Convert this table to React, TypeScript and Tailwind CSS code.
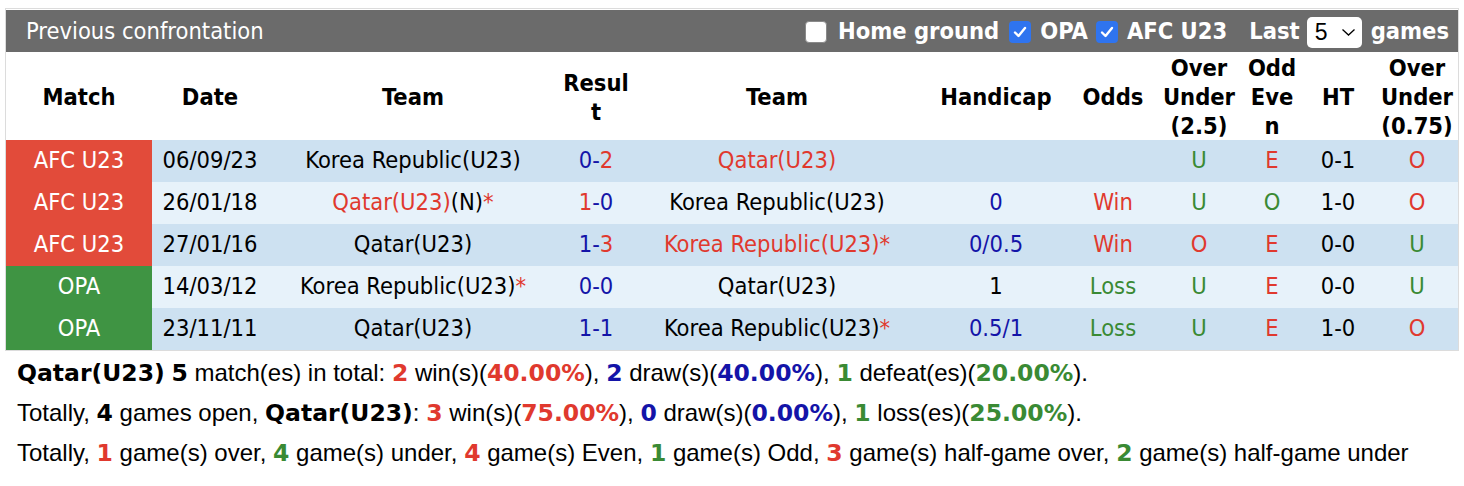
import React from 'react';

const R = 'text-[#e0392e]';
const B = 'text-[#1414a8]';
const G = 'text-[#3a8a34]';

type Cell = React.ReactNode;

interface Row {
  league: 'AFC U23' | 'OPA';
  date: string;
  home: Cell;
  score: Cell;
  away: Cell;
  hcap: Cell;
  odds: Cell;
  ou: Cell;
  oe: Cell;
  ht: string;
  ou2: Cell;
}

const rows: Row[] = [
  {
    league: 'AFC U23',
    date: '06/09/23',
    home: 'Korea Republic(U23)',
    score: <><span className={B}>0-</span><span className={R}>2</span></>,
    away: <span className={R}>Qatar(U23)</span>,
    hcap: '',
    odds: '',
    ou: <span className={G}>U</span>,
    oe: <span className={R}>E</span>,
    ht: '0-1',
    ou2: <span className={R}>O</span>,
  },
  {
    league: 'AFC U23',
    date: '26/01/18',
    home: <><span className={R}>Qatar(U23)</span>(N)<span className={R}>*</span></>,
    score: <><span className={R}>1</span><span className={B}>-0</span></>,
    away: 'Korea Republic(U23)',
    hcap: <span className={B}>0</span>,
    odds: <span className={R}>Win</span>,
    ou: <span className={G}>U</span>,
    oe: <span className={G}>O</span>,
    ht: '1-0',
    ou2: <span className={R}>O</span>,
  },
  {
    league: 'AFC U23',
    date: '27/01/16',
    home: 'Qatar(U23)',
    score: <><span className={B}>1-</span><span className={R}>3</span></>,
    away: <span className={R}>Korea Republic(U23)*</span>,
    hcap: <span className={B}>0/0.5</span>,
    odds: <span className={R}>Win</span>,
    ou: <span className={R}>O</span>,
    oe: <span className={R}>E</span>,
    ht: '0-0',
    ou2: <span className={G}>U</span>,
  },
  {
    league: 'OPA',
    date: '14/03/12',
    home: <>Korea Republic(U23)<span className={R}>*</span></>,
    score: <span className={B}>0-0</span>,
    away: 'Qatar(U23)',
    hcap: '1',
    odds: <span className={G}>Loss</span>,
    ou: <span className={G}>U</span>,
    oe: <span className={R}>E</span>,
    ht: '0-0',
    ou2: <span className={G}>U</span>,
  },
  {
    league: 'OPA',
    date: '23/11/11',
    home: 'Qatar(U23)',
    score: <span className={B}>1-1</span>,
    away: <>Korea Republic(U23)<span className={R}>*</span></>,
    hcap: <span className={B}>0.5/1</span>,
    odds: <span className={G}>Loss</span>,
    ou: <span className={G}>U</span>,
    oe: <span className={R}>E</span>,
    ht: '1-0',
    ou2: <span className={R}>O</span>,
  },
];

const cols = 'grid grid-cols-[146px_116px_290px_76px_286px_152px_82px_90px_56px_76px_1fr]';

const Check = ({ on }: { on: boolean }) =>
  on ? (
    <span className="inline-flex h-[22px] w-[22px] shrink-0 items-center justify-center rounded-[4px] bg-[#2f74ef]">
      <svg width="16" height="16" viewBox="0 0 16 16" fill="none">
        <path d="M3 8.5 L6.5 12 L13 4" stroke="white" strokeWidth="2.4" strokeLinecap="round" strokeLinejoin="round" />
      </svg>
    </span>
  ) : (
    <span className="inline-block h-[22px] w-[22px] shrink-0 rounded-[4px] border border-[#8a8a8a] bg-white" />
  );

// bold figures in the summary lines use a wider face than the running text
const Stat = ({ c, children }: { c?: string; children: React.ReactNode }) => (
  <b className={`font-['DejaVu_Sans',sans-serif] text-[23.5px] ${c ?? ''}`}>{children}</b>
);

export default function App() {
  return (
    <div className="w-[1464px] h-[486px] bg-white font-['DejaVu_Sans_Condensed','DejaVu_Sans',sans-serif] text-black">
      <div className="pt-[8px] px-[5px]">
        <div className="border border-[#dcdcdc]">
          {/* title bar */}
          <div className="mt-[1px] flex h-[42px] items-center justify-between bg-[#6b6b6b] pl-[20px] pr-[9px] pt-[2px] text-white">
            <span className="text-[23.5px]">Previous confrontation</span>
            <div className="flex items-center text-[23.5px] font-bold">
              <Check on={false} />
              <span className="ml-[11px] mr-[10px]">Home ground</span>
              <Check on={true} />
              <span className="ml-[9px] mr-[8px]">OPA</span>
              <Check on={true} />
              <span className="ml-[9px] mr-[22px]">AFC U23</span>
              <span>Last</span>
              <span className="ml-[7px] mr-[9px] flex h-[31px] w-[55px] items-center justify-between rounded-[5px] bg-white pl-[8px] pr-[6px] font-['Liberation_Sans',sans-serif] text-[23px] font-normal text-black">
                5
                <svg width="15" height="10" viewBox="0 0 15 10" fill="none">
                  <path d="M1.5 2.5 L7.5 8 L13.5 2.5" stroke="black" strokeWidth="1.3" />
                </svg>
              </span>
              <span>games</span>
            </div>
          </div>

          {/* header */}
          <div className={`${cols} h-[88px] items-center pt-[2px] text-center text-[23.5px] font-bold leading-[29px]`}>
            <div>Match</div>
            <div>Date</div>
            <div>Team</div>
            <div>Resul<br />t</div>
            <div>Team</div>
            <div>Handicap</div>
            <div>Odds</div>
            <div>Over<br />Under<br />(2.5)</div>
            <div>Odd<br />Eve<br />n</div>
            <div>HT</div>
            <div>Over<br />Under<br />(0.75)</div>
          </div>

          {/* rows */}
          <div className="text-[23.5px]">
            {rows.map((r, i) => (
              <div
                key={r.date}
                className={`${cols} h-[42px] items-center text-center ${i % 2 === 0 ? 'bg-[#cde1f1]' : 'bg-[#e7f2fa]'}`}
              >
                <div className={`flex h-full items-center justify-center text-white ${r.league === 'OPA' ? 'bg-[#3f9443]' : 'bg-[#e24b3a]'}`}>
                  {r.league}
                </div>
                <div>{r.date}</div>
                <div>{r.home}</div>
                <div>{r.score}</div>
                <div>{r.away}</div>
                <div>{r.hcap}</div>
                <div>{r.odds}</div>
                <div>{r.ou}</div>
                <div>{r.oe}</div>
                <div>{r.ht}</div>
                <div>{r.ou2}</div>
              </div>
            ))}
          </div>
        </div>
      </div>

      {/* summary */}
      <div className="flex flex-col gap-[10px] pl-[17px] pt-[7px] font-['Liberation_Sans',sans-serif] text-[24px] leading-[30px]">
        <div>
          <Stat>Qatar(U23)</Stat> <Stat>5</Stat> match(es) in total: <Stat c={R}>2</Stat> win(s)(<Stat c={R}>40.00%</Stat>), <Stat c={B}>2</Stat> draw(s)(<Stat c={B}>40.00%</Stat>), <Stat c={G}>1</Stat> defeat(es)(<Stat c={G}>20.00%</Stat>).
        </div>
        <div>
          Totally, <Stat>4</Stat> games open, <Stat>Qatar(U23)</Stat>: <Stat c={R}>3</Stat> win(s)(<Stat c={R}>75.00%</Stat>), <Stat c={B}>0</Stat> draw(s)(<Stat c={B}>0.00%</Stat>), <Stat c={G}>1</Stat> loss(es)(<Stat c={G}>25.00%</Stat>).
        </div>
        <div>
          Totally, <Stat c={R}>1</Stat> game(s) over, <Stat c={G}>4</Stat> game(s) under, <Stat c={R}>4</Stat> game(s) Even, <Stat c={G}>1</Stat> game(s) Odd, <Stat c={R}>3</Stat> game(s) half-game over, <Stat c={G}>2</Stat> game(s) half-game under
        </div>
      </div>
    </div>
  );
}
